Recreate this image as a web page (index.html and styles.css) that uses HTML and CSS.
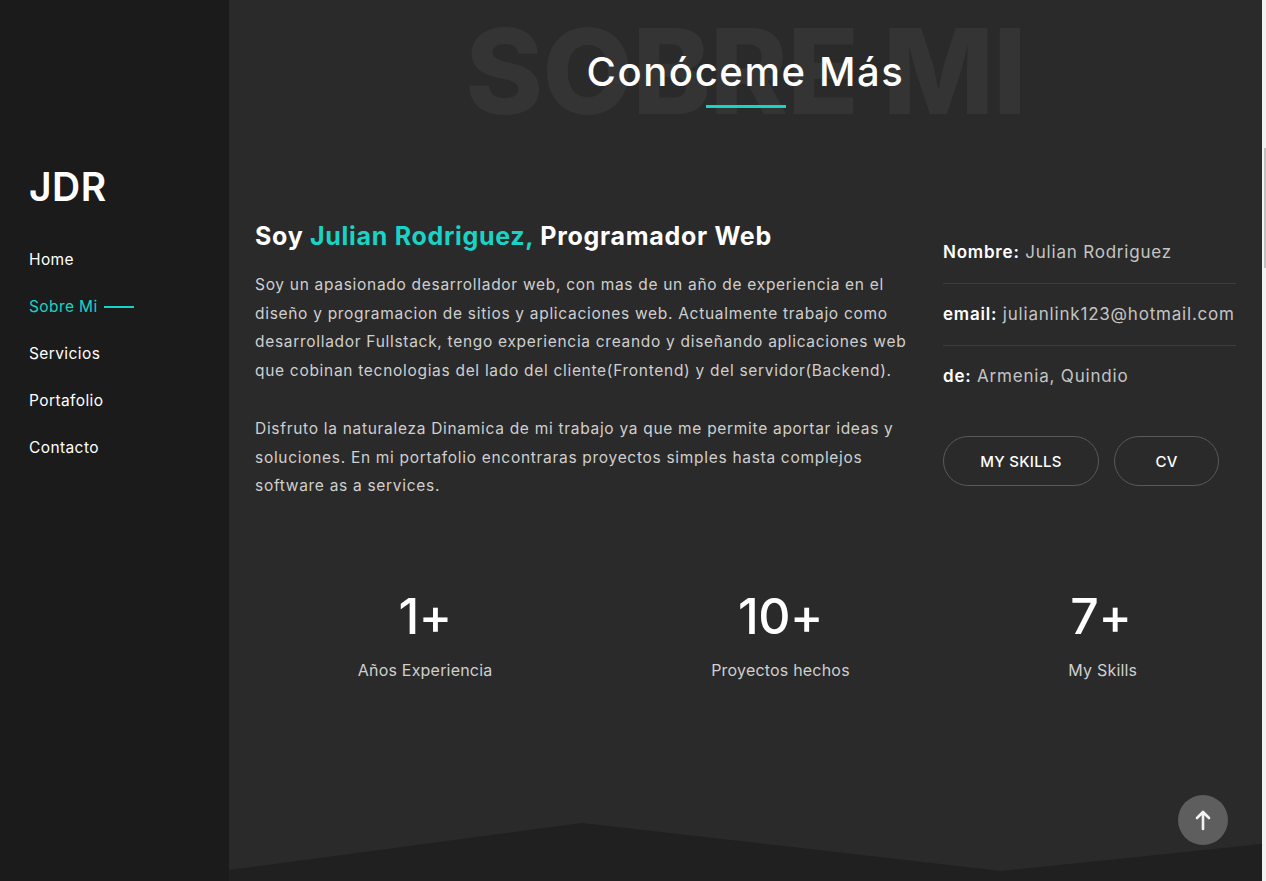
FILE: index.html
```html
<!DOCTYPE html>
<html lang="es">
<head>
<meta charset="utf-8">
<title>JDR - Sobre Mi</title>
<link rel="stylesheet" href="styles.css">
</head>
<body>
<aside class="sidebar">
  <div class="logo">JDR</div>
  <nav class="nav">
    <a class="nav-link" href="#">Home</a>
    <a class="nav-link active" href="#">Sobre Mi</a>
    <a class="nav-link" href="#">Servicios</a>
    <a class="nav-link" href="#">Portafolio</a>
    <a class="nav-link" href="#">Contacto</a>
  </nav>
</aside>
<main class="main">
  <header class="section-title">
    <span class="watermark" aria-hidden="true">SOBRE MI</span>
    <h2 class="title">Conóceme Más</h2>
    <span class="title-line"></span>
  </header>
  <section class="about">
    <div class="about-text">
      <h3 class="about-heading">Soy <span class="accent">Julian Rodriguez,</span> Programador Web</h3>
      <p class="about-p">Soy un apasionado desarrollador web, con mas de un año de experiencia en el diseño y programacion de sitios y aplicaciones web. Actualmente trabajo como desarrollador Fullstack, tengo experiencia creando y diseñando aplicaciones web que cobinan tecnologias del lado del cliente(Frontend) y del servidor(Backend).</p>
      <p class="about-p">Disfruto la naturaleza Dinamica de mi trabajo ya que me permite aportar ideas y soluciones. En mi portafolio encontraras proyectos simples hasta complejos software as a services.</p>
    </div>
    <div class="about-info">
      <div class="info-row"><b>Nombre:</b> Julian Rodriguez</div>
      <div class="info-row"><b>email:</b> julianlink123@hotmail.com</div>
      <div class="info-row"><b>de:</b> Armenia, Quindio</div>
      <div class="buttons">
        <a class="btn btn-skills" href="#">MY SKILLS</a>
        <a class="btn btn-cv" href="#">CV</a>
      </div>
    </div>
  </section>
  <section class="stats">
    <div class="stat stat-1"><div class="stat-num">1+</div><div class="stat-label">Años Experiencia</div></div>
    <div class="stat stat-2"><div class="stat-num">10+</div><div class="stat-label">Proyectos hechos</div></div>
    <div class="stat stat-3"><div class="stat-num">7+</div><div class="stat-label">My Skills</div></div>
  </section>
  <svg class="wave" viewBox="0 0 1033 60" preserveAspectRatio="none" aria-hidden="true">
    <polygon points="0,49 353,2 772,50 1033,23 1033,60 0,60" fill="#202020"/>
  </svg>
  <a class="to-top" href="#" aria-label="Subir">
    <svg width="16" height="22" viewBox="0 0 16 22" aria-hidden="true">
      <path d="M8 20V3M2 9l6-6 6 6" fill="none" stroke="#f2f2f2" stroke-width="2.6" stroke-linecap="round" stroke-linejoin="round"/>
    </svg>
  </a>
</main>
<div class="scrollbar"><div class="scroll-thumb"></div></div>
</body>
</html>
```
FILE: styles.css
```css
* { box-sizing: border-box; }
html, body { margin: 0; height: 100%; overflow: hidden; }
body {
  display: flex;
  background: #2a2a2a;
  font-family: "Inter", "Noto Sans", sans-serif;
  color: #fff;
}
.sidebar {
  width: 229px;
  flex: 0 0 229px;
  height: 881px;
  background: #1b1b1b;
  padding: 163px 0 0 29px;
}
.logo {
  font-size: 39px;
  font-weight: 600;
  line-height: 48px;
  letter-spacing: 0.5px;
}
.nav {
  display: flex;
  flex-direction: column;
  gap: 25px;
  margin-top: 38px;
}
.nav-link {
  color: #fff;
  text-decoration: none;
  font-size: 15.5px;
  letter-spacing: 0.4px;
  line-height: 22px;
  display: flex;
  align-items: center;
}
.nav-link.active { color: #18d4c6; }
.nav-link.active::after {
  content: "";
  width: 30px;
  height: 2px;
  background: #18d4c6;
  margin-left: 6px;
}
.main {
  flex: 1;
  position: relative;
  height: 881px;
  padding: 0 26px;
  overflow: hidden;
}
.section-title {
  position: relative;
  height: 190px;
  display: flex;
  flex-direction: column;
  align-items: center;
  padding-top: 47px;
}
.watermark {
  position: absolute;
  top: 4px;
  left: 0;
  right: 0;
  text-align: center;
  font-size: 118px;
  font-weight: 800;
  line-height: 134px;
  color: #343434;
  letter-spacing: -1px;
  white-space: nowrap;
}
.title {
  position: relative;
  margin: 0;
  font-size: 40px;
  font-weight: 500;
  line-height: 50px;
  letter-spacing: 1.6px;
}
.title-line {
  position: relative;
  width: 80px;
  height: 3px;
  background: #18d4c6;
  margin-top: 8px;
}
.about {
  display: grid;
  grid-template-columns: 1fr 293px;
  column-gap: 33px;
  margin-top: 29px;
}
.about-heading {
  margin: 0 0 18px;
  font-size: 25px;
  font-weight: 700;
  line-height: 34px;
  letter-spacing: 0.7px;
  white-space: nowrap;
}
.accent { color: #18d4c6; }
.about-p {
  margin: 0 0 29px;
  font-size: 15.5px;
  letter-spacing: 0.7px;
  line-height: 28.7px;
  color: #cfcfcf;
}
.about-info { padding-top: 18px; }
.info-row {
  font-size: 17px;
  letter-spacing: 0.8px;
  line-height: 26px;
  color: #c4c4c4;
  padding: 17px 0 18px;
  border-bottom: 1px solid #3d3d3d;
  white-space: nowrap;
}
.info-row:first-child { padding-top: 2px; }
.info-row:nth-child(3) { border-bottom: none; }
.info-row b { color: #fff; font-weight: 600; }
.buttons {
  display: flex;
  gap: 15px;
  margin-top: 29px;
}
.btn {
  height: 50px;
  border: 1px solid #595959;
  border-radius: 25px;
  display: flex;
  align-items: center;
  justify-content: center;
  color: #fff;
  text-decoration: none;
  font-size: 15px;
  letter-spacing: 0.3px;
  font-weight: 500;
}
.btn-skills { width: 156px; }
.btn-cv { width: 105px; }
.stats {
  display: flex;
  justify-content: space-around;
  margin: 58px -6px 0;
}
.stat { text-align: center; white-space: nowrap; }
.stat-1 { width: 135px; }
.stat-2 { width: 141px; }
.stat-3 { width: 65px; }
.stat-num {
  font-size: 50px;
  font-weight: 500;
  line-height: 56px;
  letter-spacing: -0.5px;
}
.stat-label {
  margin-top: 14px;
  font-size: 16px;
  letter-spacing: 0.2px;
  line-height: 24px;
  color: #cfcfcf;
}
.wave {
  position: absolute;
  left: 0;
  bottom: 0;
  width: 100%;
  height: 60px;
  display: block;
}
.to-top {
  position: absolute;
  right: 34px;
  top: 795px;
  width: 50px;
  height: 50px;
  border-radius: 50%;
  background: #5e5e5e;
  display: flex;
  align-items: center;
  justify-content: center;
}
.scrollbar {
  width: 4px;
  flex: 0 0 4px;
  height: 881px;
  background: #f1f1f1;
  padding-top: 148px;
  display: flex;
  justify-content: flex-end;
}
.scroll-thumb {
  width: 2px;
  height: 120px;
  background: #c1c1c1;
}
```
